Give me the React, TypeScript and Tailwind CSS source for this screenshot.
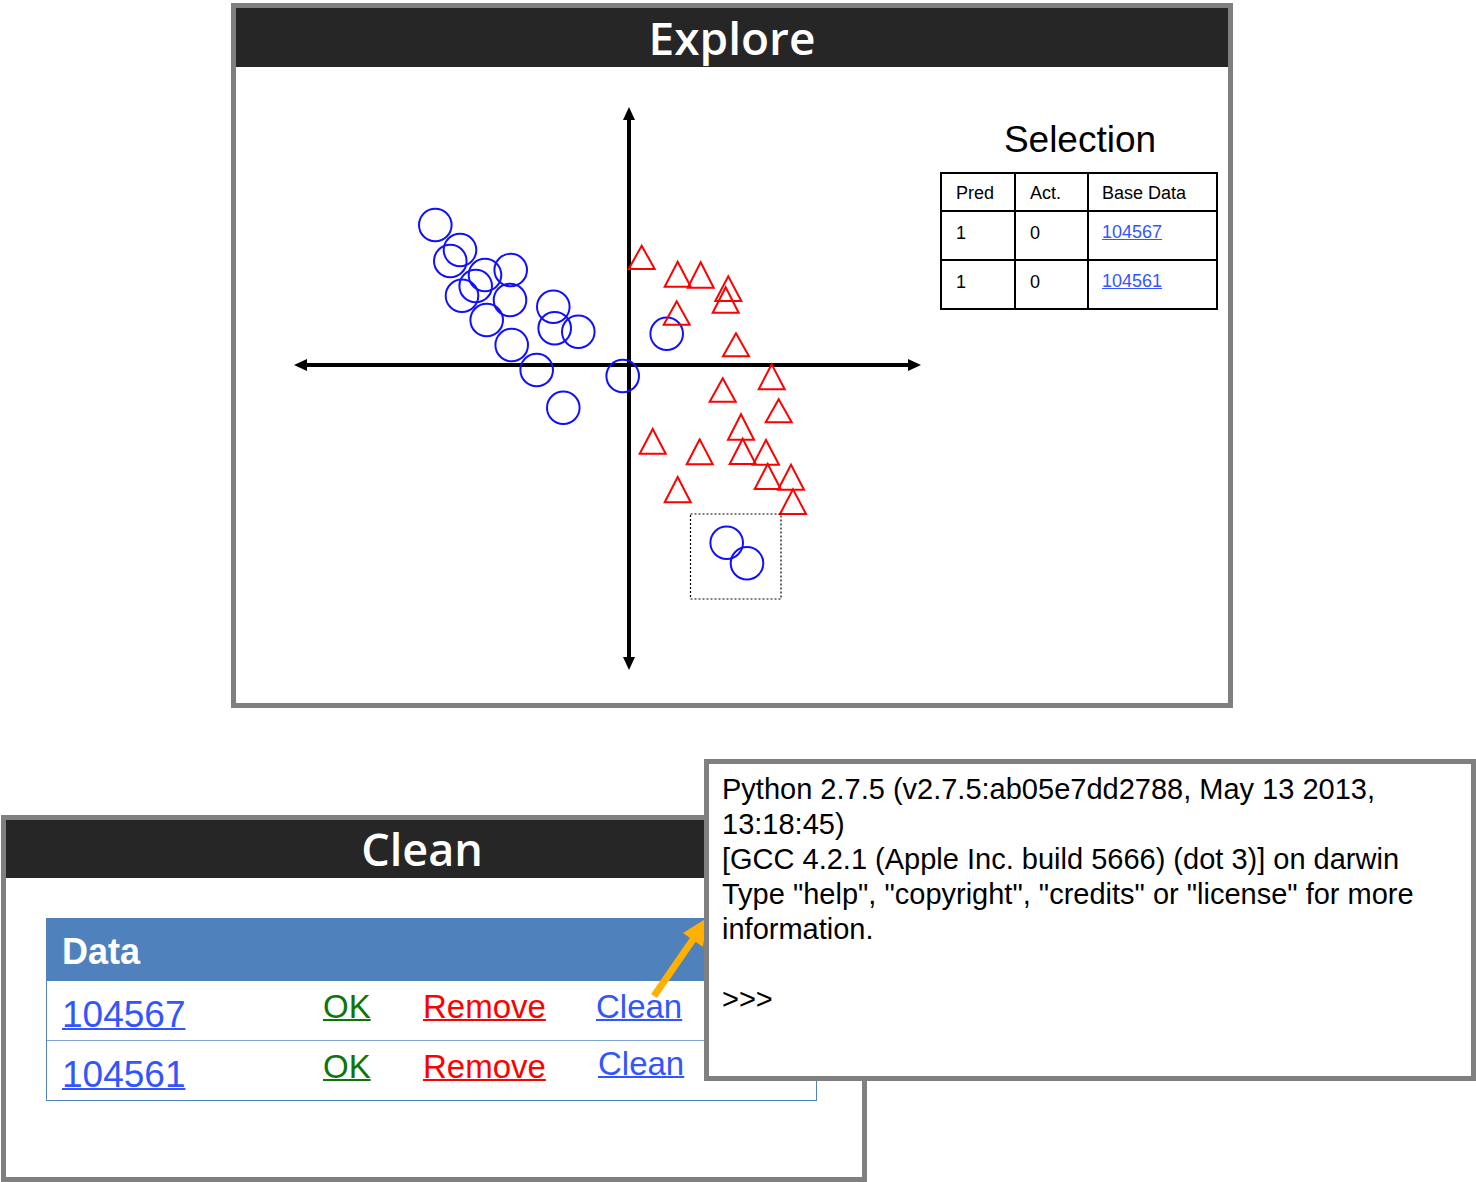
import React from "react";

const circles: [number, number][] = [
  [435.3, 225], [460, 250], [450.3, 261], [485, 275], [510.7, 270], [475.7, 286],
  [462, 295.7], [510, 300], [486.7, 320], [553.3, 306.7], [554.7, 328.3], [578.3, 331.7],
  [511.7, 345], [536.7, 370], [622.7, 376], [563.3, 407.7], [666.7, 333.7],
  [726.7, 542.7], [747, 563.3],
];

const triangles: [number, number, number][] = [
  [641.7, 245.7, 269], [677.7, 261.7, 286.7], [700.7, 262.3, 287.7], [728.3, 276.3, 301],
  [725.7, 287.3, 312.7], [676.7, 301.3, 324.7], [736, 333.3, 356.3], [771.7, 364.3, 389.3],
  [722.7, 378.3, 401.7], [778.7, 399.3, 422.3], [741, 414.3, 439.7], [652.7, 429, 453.7],
  [699.7, 439.3, 464.3], [742.7, 438.7, 464], [766, 440, 464.7], [767.7, 464, 489],
  [791, 464.7, 489.7], [677.7, 477, 502.3], [793, 489.3, 514],
];

function Scatter() {
  return (
    <svg width={650} height={580} viewBox="280 100 650 580" className="ml-[44px] mt-[33px] shrink-0">
      <line x1={304} y1={365} x2={910} y2={365} stroke="#000" strokeWidth={4} />
      <polygon points="294,365 307,359 307,371" fill="#000" />
      <polygon points="921,365 908,359 908,371" fill="#000" />
      <line x1={629} y1={118} x2={629} y2={660} stroke="#000" strokeWidth={4} />
      <polygon points="629,107 623,120 635,120" fill="#000" />
      <polygon points="629,670 623,657 635,657" fill="#000" />
      {circles.map(([x, y], i) => (
        <circle key={`c${i}`} cx={x} cy={y} r={16.3} fill="none" stroke="#1010ff" strokeWidth={2} />
      ))}
      {triangles.map(([cx, top, base], i) => (
        <polygon
          key={`t${i}`}
          points={`${cx},${top} ${cx - 13},${base} ${cx + 13},${base}`}
          fill="none"
          stroke="#ff0000"
          strokeWidth={2}
        />
      ))}
      <rect x={690.5} y={514} width={90.5} height={85} fill="none" stroke="#000" strokeWidth={1.2} strokeDasharray="2 2" />
    </svg>
  );
}

const titleFont = { fontFamily: '"Open Sans", "Noto Sans", sans-serif' };
const arial = { fontFamily: '"Liberation Sans", Arial, sans-serif' };

export default function App() {
  return (
    <div className="relative w-[1476px] h-[1182px] bg-white overflow-hidden" style={arial}>
      {/* Explore window */}
      <div className="absolute left-[231px] top-[3px] w-[1002px] h-[705px] border-[5px] border-[#808080] bg-white flex flex-col">
        <div
          className="h-[59px] bg-[#262626] text-white text-[46px] font-semibold flex items-center justify-center leading-none pb-[2px]"
          style={titleFont}
        >
          Explore
        </div>
        <div className="flex items-start">
          <Scatter />
          <div className="ml-[10px] mt-[52px] flex flex-col items-center">
            <div className="text-[37px] leading-[42px] text-black pl-[2px]">Selection</div>
            <table className="mt-[11px] border-collapse border-2 border-black text-[18px] text-black">
              <tbody>
                <tr className="h-[38px]">
                  <td className="w-[74px] border-2 border-black pl-[14px] pt-[2px] align-middle">Pred</td>
                  <td className="w-[73px] border-2 border-black pl-[14px] pt-[2px] align-middle">Act.</td>
                  <td className="w-[129px] border-2 border-black pl-[13px] pt-[2px] align-middle">Base Data</td>
                </tr>
                {["104567", "104561"].map((id) => (
                  <tr key={id} className="h-[49px]">
                    <td className="border-2 border-black pl-[14px] pt-[8px] align-top">1</td>
                    <td className="border-2 border-black pl-[14px] pt-[8px] align-top">0</td>
                    <td className="border-2 border-black pl-[13px] pt-[7px] align-top">
                      <a className="text-[#3355ff] underline">{id}</a>
                    </td>
                  </tr>
                ))}
              </tbody>
            </table>
          </div>
        </div>
      </div>

      {/* Clean window */}
      <div className="absolute left-[1px] top-[815px] w-[866px] h-[367px] border-[5px] border-[#808080] bg-white flex flex-col">
        <div
          className="h-[58px] bg-[#262626] text-white text-[45px] font-semibold flex items-center justify-center leading-none pr-[24px] pb-[2px]"
          style={titleFont}
        >
          Clean
        </div>
        <div className="ml-[40px] mt-[40px] w-[771px] border-[1.5px] border-[#4f81bd] flex flex-col">
          <div className="h-[61px] bg-[#4f81bd] text-white text-[36px] font-bold flex items-center pl-[15px] pt-[5px]">
            Data
          </div>
          {["104567", "104561"].map((id, i) => (
            <div
              key={id}
              className={`h-[60px] flex items-center pl-[15px] border-t-[1.5px] ${i === 0 ? "border-[#4f81bd]" : "border-[#7fa3d0]"}`}
            >
              <a className="w-[261px] text-[37px] text-[#3355ff] underline decoration-2 pt-[8px]">{id}</a>
              <a className="w-[100px] text-[33px] text-[#0c760c] underline decoration-2 -mt-[8px]">OK</a>
              <a className="w-[173px] text-[33px] text-[#ff0000] underline decoration-2 -mt-[8px]">Remove</a>
              <a
                className={`text-[33px] text-[#3355ff] underline decoration-2 ${i === 1 ? "pl-[2px] -mt-[14px]" : "-mt-[8px]"}`}
              >
                Clean
              </a>
            </div>
          ))}
        </div>
      </div>

      {/* orange arrow */}
      <svg className="absolute left-0 top-0" width={1476} height={1182} viewBox="0 0 1476 1182">
        <line x1={654} y1={996} x2={694} y2={938} stroke="#ffb000" strokeWidth={7} />
        <polygon points="707,918 683,933 703,947" fill="#ffb000" />
      </svg>

      {/* Python window */}
      <div className="absolute left-[704px] top-[759px] w-[772px] h-[322px] border-[5px] border-[#808080] bg-white pl-[13px] pt-[8px] text-black text-[29px] leading-[35px]">
        <div className="whitespace-nowrap">Python 2.7.5 (v2.7.5:ab05e7dd2788, May 13 2013,</div>
        <div className="whitespace-nowrap">13:18:45)</div>
        <div className="whitespace-nowrap">[GCC 4.2.1 (Apple Inc. build 5666) (dot 3)] on darwin</div>
        <div className="whitespace-nowrap">Type "help", "copyright", "credits" or "license" for more</div>
        <div className="whitespace-nowrap">information.</div>
        <div className="h-[35px]" />
        <div className="whitespace-nowrap">&gt;&gt;&gt;</div>
      </div>
    </div>
  );
}
